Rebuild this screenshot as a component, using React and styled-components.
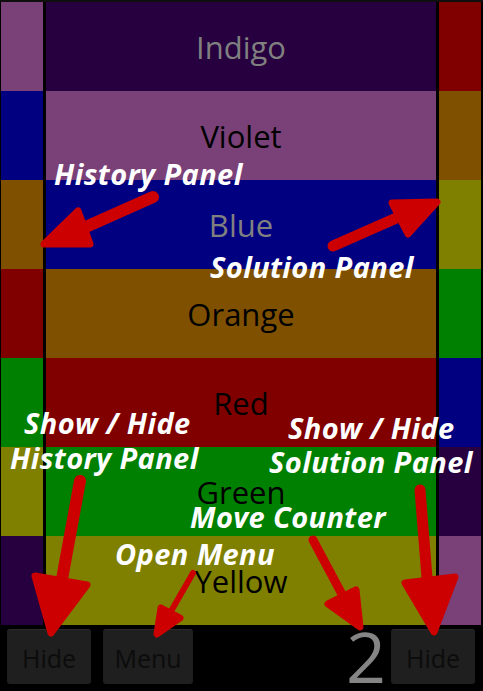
import React from "react";
import styled, { createGlobalStyle } from "styled-components";

const Global = createGlobalStyle`
  html, body { margin: 0; padding: 0; background: #000; }
  body { font-family: "Open Sans", "DejaVu Sans", sans-serif; }
`;

const Page = styled.div`
  position: relative;
  width: 483px;
  height: 691px;
  background: #000;
  display: flex;
  flex-direction: column;
  overflow: hidden;
`;

const TopEdge = styled.div`
  height: 2px;
  background: #0f0f0f;
`;

const Board = styled.div`
  display: flex;
  gap: 3px;
  padding: 0 2px 0 1px;
  height: 623px;
`;

const SidePanel = styled.div`
  width: 42px;
  display: flex;
  flex-direction: column;
`;

const MainPanel = styled.div`
  flex: 1;
  display: flex;
  flex-direction: column;
`;

const Cell = styled.div`
  height: 89px;
  background: ${(p) => p.$bg};
`;

const Band = styled.div`
  height: 89px;
  background: ${(p) => p.$bg};
  color: ${(p) => p.$fg};
  display: flex;
  align-items: center;
  justify-content: center;
  font-family: "Open Sans", sans-serif;
  font-size: 31px;
  line-height: 1;
  padding-top: 1px;
`;

const BottomBar = styled.div`
  height: 66px;
  display: flex;
  align-items: flex-start;
  padding: 4px 8px 0 7px;
  box-sizing: border-box;
`;

const Button = styled.div`
  width: ${(p) => p.$w}px;
  height: 55px;
  margin-right: ${(p) => p.$mr || 0}px;
  box-sizing: border-box;
  background: #1f1f1f;
  border-top: 1px solid #2b2b2b;
  border-radius: 3px;
  color: #0c0c0c;
  font-family: "Open Sans", sans-serif;
  font-size: 25px;
  display: flex;
  align-items: center;
  justify-content: center;
  padding-top: 1px;
`;

const Spacer = styled.div`
  flex: 1;
`;

const Counter = styled.div`
  height: 55px;
  line-height: 55px;
  font-family: "Open Sans", sans-serif;
  font-size: 70px;
  color: #858585;
  margin-right: 5px;
`;

const Overlay = styled.div`
  position: absolute;
  inset: 0;
  pointer-events: none;
`;

const Note = styled.div`
  position: absolute;
  left: ${(p) => p.$x}px;
  top: ${(p) => p.$y}px;
  color: #fff;
  font-family: "Open Sans", sans-serif;
  font-weight: 700;
  font-style: italic;
  font-size: 29px;
  line-height: 1;
  white-space: nowrap;
  letter-spacing: 0.4px;
`;

const ArrowLayer = styled.svg`
  position: absolute;
  left: 0;
  top: 0;
`;

const sideHistory = ["#7a4078", "#000080", "#7f5000", "#800000", "#008000", "#808000", "#26003f"];
const sideSolution = ["#800000", "#7f5000", "#808000", "#008000", "#000080", "#26003f", "#7a4078"];
const bands = [
  { name: "Indigo", bg: "#26003f", fg: "#808080" },
  { name: "Violet", bg: "#7a4078", fg: "#000" },
  { name: "Blue", bg: "#000080", fg: "#808080" },
  { name: "Orange", bg: "#7f5000", fg: "#000" },
  { name: "Red", bg: "#800000", fg: "#000" },
  { name: "Green", bg: "#008000", fg: "#000" },
  { name: "Yellow", bg: "#808000", fg: "#000" },
];

const notes = [
  { t: "History Panel", x: 54, y: 159 },
  { t: "Solution Panel", x: 210, y: 252 },
  { t: "Show / Hide", x: 24, y: 408 },
  { t: "History Panel", x: 10, y: 443 },
  { t: "Show / Hide", x: 288, y: 413 },
  { t: "Solution Panel", x: 269, y: 447 },
  { t: "Move Counter", x: 190, y: 502 },
  { t: "Open Menu", x: 115, y: 539 },
];

const arrows = [
  { line: [153, 197, 70, 234], head: "44,244 78,211 90,244", w: 12 },
  { line: [333, 246, 410, 212], head: "437,202 392,203 408,234", w: 11 },
  { line: [80, 481, 60, 590], head: "51,633 35,576 87,585", w: 12 },
  { line: [193, 573, 170, 613], head: "157,634 161,608 180,618", w: 6 },
  { line: [313, 540, 345, 600], head: "360,627 328,604 356,590", w: 9 },
  { line: [420, 490, 428, 590], head: "434,632 405,583 455,577", w: 11 },
];

export default function App() {
  return (
    <Page>
      <Global />
      <TopEdge />
      <Board>
        <SidePanel>
          {sideHistory.map((c, i) => (
            <Cell key={i} $bg={c} />
          ))}
        </SidePanel>
        <MainPanel>
          {bands.map((b) => (
            <Band key={b.name} $bg={b.bg} $fg={b.fg}>
              {b.name}
            </Band>
          ))}
        </MainPanel>
        <SidePanel>
          {sideSolution.map((c, i) => (
            <Cell key={i} $bg={c} />
          ))}
        </SidePanel>
      </Board>
      <BottomBar>
        <Button $w={84} $mr={12}>Hide</Button>
        <Button $w={90}>Menu</Button>
        <Spacer />
        <Counter>2</Counter>
        <Button $w={84}>Hide</Button>
      </BottomBar>
      <Overlay>
        {notes.map((n, i) => (
          <Note key={i} $x={n.x} $y={n.y}>
            {n.t}
          </Note>
        ))}
        <ArrowLayer width="483" height="691" viewBox="0 0 483 691">
          {arrows.map((a, i) => (
            <g key={i} fill="#cc0000" stroke="#cc0000" strokeLinejoin="round" strokeLinecap="round">
              <line x1={a.line[0]} y1={a.line[1]} x2={a.line[2]} y2={a.line[3]} strokeWidth={a.w} />
              <polygon points={a.head} strokeWidth={7} />
            </g>
          ))}
        </ArrowLayer>
      </Overlay>
    </Page>
  );
}
